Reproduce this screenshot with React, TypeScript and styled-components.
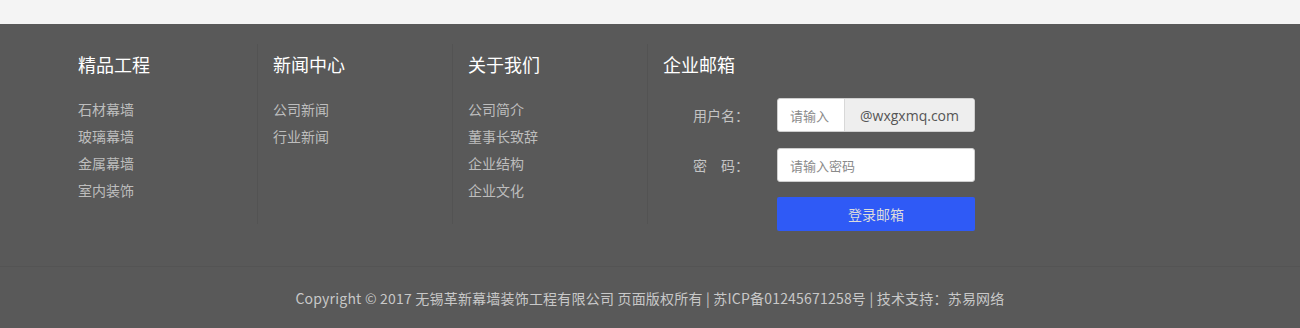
import React from 'react';
import styled, { createGlobalStyle } from 'styled-components';

const GlobalStyle = createGlobalStyle`
  html, body {
    margin: 0;
    padding: 0;
    background: #595959;
    font-family: "Microsoft YaHei", "Noto Sans CJK SC", "Noto Sans", sans-serif;
  }
  * { box-sizing: border-box; }
`;

interface Column {
  title: string;
  links: string[];
}

const columns: Column[] = [
  { title: '精品工程', links: ['石材幕墙', '玻璃幕墙', '金属幕墙', '室内装饰'] },
  { title: '新闻中心', links: ['公司新闻', '行业新闻'] },
  { title: '关于我们', links: ['公司简介', '董事长致辞', '企业结构', '企业文化'] },
];

const App = () => {
  return (
    <>
      <GlobalStyle />
      <TopBand />
      <Footer>
        <Main>
          <Container>
            {columns.map((col) => (
              <Col key={col.title} $divider>
                <Heading>{col.title}</Heading>
                <LinkList>
                  {col.links.map((l) => (
                    <li key={l}>{l}</li>
                  ))}
                </LinkList>
              </Col>
            ))}
            <Col>
              <Heading>企业邮箱</Heading>
              <Form>
                <Row>
                  <Label>用户名：</Label>
                  <Field>
                    <UserInput placeholder="请输入" />
                    <Suffix>@wxgxmq.com</Suffix>
                  </Field>
                </Row>
                <Row>
                  <Label>密　码：</Label>
                  <Field>
                    <PassInput type="text" placeholder="请输入密码" />
                  </Field>
                </Row>
                <Row $tight>
                  <Label />
                  <LoginButton>登录邮箱</LoginButton>
                </Row>
              </Form>
            </Col>
          </Container>
        </Main>
        <Copyright>
          Copyright © 2017 无锡革新幕墙装饰工程有限公司 页面版权所有 | 苏ICP备01245671258号 | 技术支持：苏易网络
        </Copyright>
      </Footer>
    </>
  );
};

const TopBand = styled.div`
  height: 24px;
  background: #f4f4f4;
`;

const Footer = styled.footer`
  background: #595959;
  padding-top: 20px;
`;

const Main = styled.div`
  padding-bottom: 42px;
  border-bottom: 1px solid #545454;
`;

const Container = styled.div`
  width: 1174px;
  margin: 0 auto;
  display: flex;
`;

const Col = styled.div<{ $divider?: boolean }>`
  width: 195px;
  height: 180px;
  padding: 8px 0 0 15px;
  border-right: 1px solid ${(p) => (p.$divider ? '#535353' : 'transparent')};
`;

const Heading = styled.h3`
  margin: 0 0 20px;
  font-size: 18px;
  line-height: 24px;
  font-weight: normal;
  color: #ffffff;
  white-space: nowrap;
`;

const LinkList = styled.ul`
  list-style: none;
  margin: 0;
  padding: 0;

  li {
    font-size: 14px;
    line-height: 27px;
    color: #bdbdbd;
    white-space: nowrap;
  }
`;

const Form = styled.div`
  display: flex;
  flex-direction: column;
  gap: 16px;
  padding-top: 2px;
  width: 320px;
`;

const Row = styled.div<{ $tight?: boolean }>`
  display: flex;
  align-items: center;
  margin-top: ${(p) => (p.$tight ? '-1px' : '0')};
`;

const Label = styled.span`
  width: 86px;
  margin-right: 28px;
  text-align: right;
  font-size: 14px;
  color: #c4c4c4;
  white-space: nowrap;
`;

const Field = styled.div`
  display: flex;
  width: 198px;
  height: 34px;
  background: #ffffff;
  border: 1px solid #cfcfcf;
  border-radius: 3px;
  overflow: hidden;
`;

const baseInput = `
  border: none;
  outline: none;
  background: transparent;
  font-family: inherit;
  font-size: 13px;
  color: #555;
  padding: 0 12px;
  height: 100%;
  &::placeholder { color: #8a8a8a; }
`;

const UserInput = styled.input`
  ${baseInput}
  width: 66px;
`;

const PassInput = styled.input`
  ${baseInput}
  width: 100%;
`;

const Suffix = styled.span`
  flex: 1;
  display: flex;
  align-items: center;
  justify-content: center;
  background: #eeeeee;
  border-left: 1px solid #d8d8d8;
  font-family: "Open Sans", "Noto Sans", sans-serif;
  font-size: 14px;
  color: #555;
`;

const LoginButton = styled.button`
  width: 198px;
  height: 34px;
  border: none;
  border-radius: 2px;
  background: #2f5af6;
  color: #dcdcdc;
  font-family: inherit;
  font-size: 14px;
  cursor: pointer;
`;

const Copyright = styled.div`
  text-align: center;
  font-size: 14px;
  line-height: 62px;
  letter-spacing: 0.2px;
  color: #c8c8c8;
  white-space: nowrap;
`;

export default App;
